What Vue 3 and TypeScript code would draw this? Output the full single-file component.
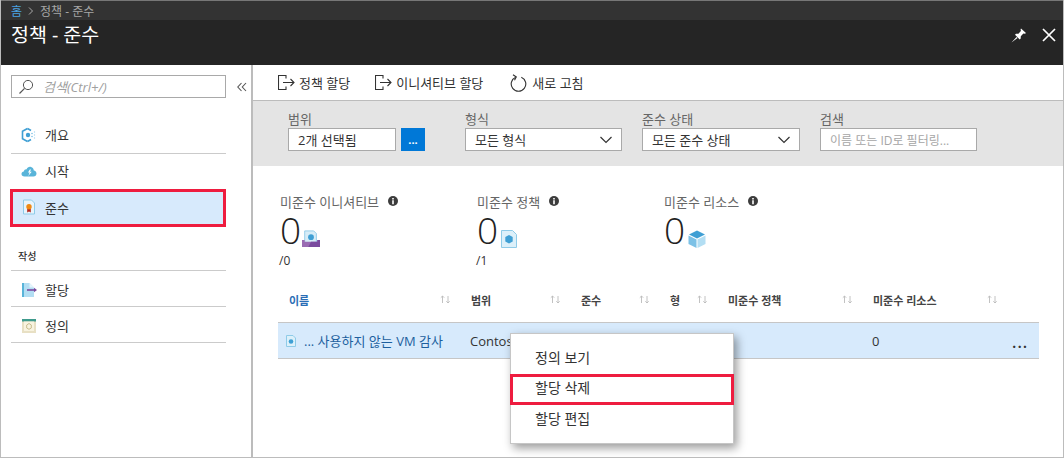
<script setup lang="ts">
const filters = [
  { label: '형식', value: '모든 형식', width: 157 },
  { label: '준수 상태', value: '모든 준수 상태', width: 158 },
];

const metrics = [
  { label: '미준수 이니셔티브', total: '/0', icon: 'initiative', width: 197 },
  { label: '미준수 정책', total: '/1', icon: 'policy', width: 187 },
  { label: '미준수 리소스', total: '', icon: 'resource', width: 160 },
];

const columns = [
  { label: '이름', width: 182, active: true },
  { label: '범위', width: 110, active: false },
  { label: '준수', width: 89, active: false },
  { label: '형', width: 58, active: false },
  { label: '미준수 정책', width: 145, active: false },
  { label: '미준수 리소스', width: 145, active: false },
];

const menuItems = ['정의 보기', '할당 삭제', '할당 편집'];
</script>

<template>
  <div class="page">
    <header class="top">
      <nav class="crumbs">
        <span class="home">홈</span>
        <svg class="crumb-sep" width="6" height="8" viewBox="0 0 6 8"><path d="M1 .5 4.500 4 1 7.500" fill="none" stroke="#aaa" /></svg>
        <span>정책 - 준수</span>
      </nav>
      <div class="title-bar">
        <h1>정책 - 준수</h1>
        <div class="window-actions">
          <svg width="17" height="15" viewBox="0 0 17 15"><path d="M11 .5 16 5 15 5.800 13.400 5.600 10.800 8.300 10.700 10.600 9.700 11.500 5 6.800 6 5.800 8.400 5.700 10.900 3 10.600 1.300ZM6.500 9 7.500 10 1.500 14.500Z" fill="#fff" /></svg>
          <svg width="14" height="14" viewBox="0 0 14 14"><path d="M1 1 13 13M13 1 1 13" stroke="#fff" stroke-width="1.700" /></svg>
        </div>
      </div>
    </header>

    <div class="body">
      <aside class="sidebar">
        <div class="search-row">
          <div class="search">
            <svg width="16" height="16" viewBox="0 0 16 16"><circle cx="10" cy="6" r="4.600" fill="none" stroke="#555" /><path d="M6.600 9.400 1.500 14.500" stroke="#555" stroke-width="1.200" /></svg>
            <span>검색(Ctrl+/)</span>
          </div>
          <svg class="collapse" width="10" height="10" viewBox="0 0 10 10"><path d="M4.500 1 .8 5l3.700 4M9 1 5.300 5 9 9" fill="none" stroke="#555" stroke-width="1.100" /></svg>
        </div>

        <ul class="menu first">
          <li>
            <svg width="16" height="16" viewBox="0 0 16 16"><path d="M6.500 1.500 1.500 4.300v7.400l5 2.800" fill="none" stroke="#3f9fd4" stroke-width="1.600" /><path d="M6.500 1.500 10 3.500M6.500 14.500 10 12.500" fill="none" stroke="#3f9fd4" stroke-width="1.600" /><circle cx="7" cy="8" r="2.200" fill="#3f9fd4" /><circle cx="11" cy="6.500" r=".8" fill="#7cc1e6" /><circle cx="11" cy="9.500" r=".8" fill="#7cc1e6" /><circle cx="13.500" cy="5" r=".7" fill="#a9d8f0" /><circle cx="13.500" cy="8" r=".7" fill="#a9d8f0" /><circle cx="13.500" cy="11" r=".7" fill="#a9d8f0" /></svg>
            <span>개요</span>
          </li>
          <li>
            <svg width="16" height="16" viewBox="0 0 16 16"><path d="M3.500 13.500C1.500 13.500 .5 12.300.5 11c0-1.400 1-2.400 2.300-2.500C3.200 7 4.300 6.200 5.500 6.400 6.300 4.500 8 3.500 10 4c1.700.4 2.700 1.800 2.800 3.400 1.600.2 2.700 1.500 2.700 3 0 1.700-1.300 3.100-3 3.100Z" fill="#59b4d9" /><path d="M8.800 6.500 7 9.500h1.600L7.300 13l3.400-4.300H9l1-2.200Z" fill="#fff" /></svg>
            <span>시작</span>
          </li>
          <li class="selected">
            <svg width="16" height="16" viewBox="0 0 16 16"><path d="M2.500 1h8l3 3v11h-11Z" fill="#e8f4fb" stroke="#8fcbe8" /><path d="M6.200 9.500v4l1.800-1 1.800 1v-4Z" fill="#b5261e" /><circle cx="8" cy="7.800" r="2.700" fill="#f08a13" /></svg>
            <span>준수</span>
          </li>
        </ul>

        <div class="section-label">작성</div>
        <ul class="menu">
          <li>
            <svg width="16" height="16" viewBox="0 0 16 16"><path d="M1 1h7.500l4.500 4.500V15H1Z" fill="#b3def3" /><path d="M1 1h2v14H1Z" fill="#59b4d9" /><path d="M8.500 1v4.500H13Z" fill="#e5f4fb" /><path d="M6 8h8" stroke="#7a4a9e" stroke-width="1.600" /><path d="M13 5.800 16 8l-3 2.200Z" fill="#7a4a9e" /></svg>
            <span>할당</span>
          </li>
          <li>
            <svg width="16" height="16" viewBox="0 0 16 16"><path d="M1 1.500h14V15H1Z" fill="#e8e0c4" /><path d="M1 1h14v2.500H1Z" fill="#3f9a8c" /><path d="M3 3.500h10V13H3Z" fill="#f8f3e0" /><path d="M8 5.500 10.300 7v3L8 11.300 5.700 10V7Z" fill="#f8f3e0" stroke="#c8bd8e" /></svg>
            <span>정의</span>
          </li>
        </ul>
      </aside>

      <main class="content">
        <div class="toolbar">
          <button class="tool">
            <svg width="17" height="16" viewBox="0 0 17 16"><path d="M8 3.500V.5H.5v14H8v-3M5 7.500h11M12.500 4l3.500 3.500-3.500 3.500" fill="none" stroke="#333" stroke-width="1.100" /></svg>
            <span>정책 할당</span>
          </button>
          <button class="tool initiative-tool">
            <svg width="17" height="16" viewBox="0 0 17 16"><path d="M8 3.500V.5H.5v14H8v-3M5 7.500h11M12.500 4l3.500 3.500-3.500 3.500" fill="none" stroke="#333" stroke-width="1.100" /></svg>
            <span>이니셔티브 할당</span>
          </button>
          <button class="tool refresh-tool">
            <svg width="17" height="18" viewBox="0 0 17 18"><path d="M11.300 3.200a7.300 7.300 0 1 1-5.600 0" fill="none" stroke="#333" stroke-width="1.100" /><path d="M3 .7 6.300 3 4.500 6.300" fill="none" stroke="#333" stroke-width="1.100" /></svg>
            <span>새로 고침</span>
          </button>
        </div>

        <div class="filters">
          <div class="field">
            <label>범위</label>
            <div class="scope">
              <div class="input scope-input">2개 선택됨</div>
              <button class="scope-button">...</button>
            </div>
          </div>
          <div v-for="filter in filters" :key="filter.label" class="field">
            <label>{{ filter.label }}</label>
            <div class="input select" :style="{ width: filter.width + 'px' }">
              <span>{{ filter.value }}</span>
              <svg width="14" height="8" viewBox="0 0 14 8"><path d="M1.500 1 7 6.500 12.500 1" fill="none" stroke="#333" stroke-width="1.200" /></svg>
            </div>
          </div>
          <div class="field">
            <label>검색</label>
            <div class="input search-input">이름 또는 ID로 필터링...</div>
          </div>
        </div>

        <section class="metrics">
          <div v-for="metric in metrics" :key="metric.label" class="metric" :style="{ width: metric.width + 'px' }">
            <div class="metric-label">
              <span>{{ metric.label }}</span>
              <svg width="10" height="10" viewBox="0 0 10 10"><circle cx="5" cy="5" r="5" fill="#3c3c3c" /><path d="M4.200 2h1.600v1.400H4.200ZM4.200 4.300h1.600v3.900H4.200Z" fill="#fff" /></svg>
            </div>
            <div class="metric-value">
              <span>0</span>
              <svg v-if="metric.icon === 'initiative'" class="initiative-icon" width="18" height="18" viewBox="0 0 20 20"><path d="M3 1h10l3 3v12H3Z" fill="#d6ecf7" stroke="#8fcbe8" /><circle cx="10" cy="8" r="3.200" fill="#3f9fd4" /><path d="M0 11h3v2h14v-2h3v8H0Z" fill="#9a6bb3" /><path d="M10 13h7v-2h3v8H7Z" fill="#7a4a9e" /></svg>
              <svg v-else-if="metric.icon === 'policy'" width="16" height="18" viewBox="0 0 16 18"><path d="M.5.500h11l4 4v13H.5Z" fill="#dcf0fa" stroke="#8fcbe8" /><path d="M8 5l3.700 2.100v4.300L8 13.500l-3.700-2.100V7.100Z" fill="#3f9fd4" /></svg>
              <svg v-else width="18" height="18" viewBox="0 0 18 18"><path d="M9 .5 17 4.500 9 8.500 1 4.500Z" fill="#3f9fd4" /><path d="M.500 5.500 8.500 9.500V18L.500 14Z" fill="#7cc1e6" /><path d="M17.500 5.500 9.500 9.500V18l8-4Z" fill="#b3def3" /></svg>
            </div>
            <div class="metric-total">{{ metric.total }}</div>
          </div>
        </section>

        <section class="table">
          <div class="table-head">
            <div
              v-for="column in columns"
              :key="column.label"
              class="head-cell"
              :class="{ active: column.active }"
              :style="{ width: column.width + 'px' }"
            >
              <span>{{ column.label }}</span>
              <svg class="sort" width="11" height="9" viewBox="0 0 11 9"><path d="M2.500 8V1M.8 2.700 2.500 1l1.700 1.700M8 1v7M6.300 6.300 8 8l1.700-1.700" fill="none" stroke="#bbb" stroke-width=".9" /></svg>
            </div>
          </div>

          <div class="table-row">
            <div class="name-cell">
              <svg width="10" height="12" viewBox="0 0 10 12"><path d="M.5.500h6.500l2.500 2.500v8.500h-9Z" fill="#dcf0fa" stroke="#8fcbe8" /><circle cx="5" cy="6.500" r="2.300" fill="#3f9fd4" /></svg>
              <span>... 사용하지 않는 VM 감사</span>
            </div>
            <div class="scope-cell">Contoso</div>
            <div class="resource-cell">0</div>
            <div class="more-cell">...</div>

            <ul class="context-menu">
              <li
                v-for="item in menuItems"
                :key="item"
                :class="{ flagged: item === '할당 삭제' }"
              >{{ item }}</li>
            </ul>
          </div>
        </section>
      </main>
    </div>
  </div>
</template>

<style>
html,
body {
  margin: 0;
  background: #fff;
}
</style>

<style scoped>
.page {
  width: 1064px;
  height: 458px;
  box-sizing: border-box;
  display: flex;
  flex-direction: column;
  overflow: hidden;
  border: 1px solid #bcbcbc;
  border-top: 0;
  font-family: "Open Sans", "Noto Sans CJK KR", sans-serif;
  font-size: 13px;
  color: #333;
}

ul {
  list-style: none;
  margin: 0;
  padding: 0;
}

button {
  font: inherit;
  border: 0;
  padding: 0;
  background: none;
  color: inherit;
}

.top {
  flex: none;
  border-top: 1px solid #777;
  background: #252525;
}

.crumbs {
  height: 19px;
  display: flex;
  align-items: center;
  gap: 6px;
  padding-left: 10px;
  background: #333;
  font-size: 12px;
  color: #a6a6a6;
}

.home {
  color: #4ba3e3;
}

.title-bar {
  height: 45px;
  display: flex;
  justify-content: space-between;
  padding: 0 7px 0 10px;
}

h1 {
  margin: 3px 0 0;
  font-size: 19.500px;
  font-weight: 400;
  line-height: 24px;
  color: #fff;
}

.window-actions {
  display: flex;
  align-items: center;
  gap: 15px;
  height: 30px;
}

.body {
  flex: 1;
  min-height: 0;
  display: flex;
}

.sidebar {
  flex: none;
  width: 250px;
  border-right: 2px solid #bcbcbc;
  padding-top: 10px;
}

.search-row {
  display: flex;
  align-items: center;
  padding-left: 10px;
}

.search {
  width: 215px;
  height: 23px;
  box-sizing: border-box;
  display: flex;
  align-items: center;
  gap: 9px;
  padding-left: 6px;
  border: 1px solid #a9a9a9;
  color: #a0a0a0;
  font-style: italic;
}

.collapse {
  margin-left: 11px;
}

.menu {
  width: 215px;
  margin-left: 10px;
}

.menu.first {
  margin-top: 20px;
}

.menu.first li {
  padding-bottom: 2px;
}

.menu li {
  height: 36px;
  box-sizing: border-box;
  display: flex;
  align-items: center;
  gap: 8px;
  padding-left: 10px;
  border-bottom: 1px solid #cbcbcb;
  color: #333;
}

.menu li.selected {
  width: 216px;
  height: 38px;
  margin: -1px 0 0 -1px;
  padding-left: 8px;
  border: 3px solid #ee1c3f;
  background: #d7eafc;
}

.section-label {
  margin: 20px 0 0 17px;
  height: 23px;
  font-size: 10px;
  font-weight: 500;
  line-height: 18px;
  color: #333;
}

.section-label + .menu {
  border-top: 1px solid #cbcbcb;
}

.section-label + .menu li {
  padding-top: 2px;
}

.content {
  flex: 1;
  min-width: 0;
}

.toolbar {
  height: 35px;
  display: flex;
  align-items: center;
  padding-left: 25px;
  border-bottom: 1px solid #bcbcbc;
}

.tool {
  display: flex;
  align-items: center;
  gap: 4px;
  color: #333;
}

.initiative-tool {
  margin-left: 25px;
}

.refresh-tool {
  margin-left: 27px;
  gap: 5px;
}

.filters {
  height: 65px;
  box-sizing: border-box;
  display: flex;
  gap: 20px;
  padding: 10px 0 0 35px;
  background: #e4e4e4;
}

.field label {
  display: block;
  height: 17px;
  line-height: 17px;
  color: #666;
}

.scope {
  display: flex;
  gap: 5px;
  margin-right: 20px;
}

.input {
  height: 23px;
  box-sizing: border-box;
  display: flex;
  align-items: center;
  padding: 0 9px;
  border: 1px solid #a9a9a9;
  background: #fff;
  color: #333;
}

.scope-input {
  width: 108px;
}

.scope-button {
  width: 24px;
  height: 23px;
  background: #0078d7;
  color: #fff;
  font-weight: 700;
  font-size: 11px;
  line-height: 23px;
}

.select {
  justify-content: space-between;
}

.select svg {
  margin-right: -1px;
}

.search-input {
  width: 157px;
  color: #a6a6a6;
  font-size: 12px;
}

.metrics {
  display: flex;
  height: 123px;
  box-sizing: border-box;
  padding: 27px 0 0 27px;
}

.metric-label {
  display: flex;
  align-items: center;
  gap: 9px;
  height: 16px;
  color: #666;
}

.metric-value {
  display: flex;
  align-items: flex-end;
  gap: 3px;
  height: 38px;
  margin-top: 2px;
  font-size: 37px;
  font-weight: 300;
  line-height: 38px;
  color: #222;
}

.metric-value svg {
  margin-bottom: 1px;
}

.metric-value .initiative-icon {
  margin-left: -2px;
}

.metric-total {
  height: 16px;
  margin-top: 4px;
  margin-left: -1px;
  line-height: 16px;
  font-size: 12px;
  color: #333;
}

.table {
  width: 761px;
  margin-left: 25px;
}

.table-head {
  display: flex;
  height: 33px;
  box-sizing: border-box;
  padding-top: 4px;
}

.head-cell {
  position: relative;
  box-sizing: border-box;
  padding-left: 11px;
  font-size: 11px;
  font-weight: 600;
  line-height: 16px;
  color: #444;
}

.head-cell.active {
  color: #2a6db5;
}

.sort {
  position: absolute;
  right: 9px;
  top: 2px;
}

.table-row {
  position: relative;
  height: 37px;
  box-sizing: border-box;
  display: flex;
  align-items: center;
  border-top: 1px solid #c6c6c6;
  border-bottom: 1px solid #c6c6c6;
  background: #d7eafc;
}

.name-cell {
  width: 192px;
  box-sizing: border-box;
  display: flex;
  align-items: center;
  gap: 8px;
  padding-left: 8px;
  color: #1d5f9e;
}

.scope-cell {
  width: 402px;
}

.resource-cell {
  width: 140px;
}

.more-cell {
  font-size: 16px;
  font-weight: 600;
  letter-spacing: 1px;
  line-height: 16px;
  margin-top: 2px;
}

.context-menu {
  position: absolute;
  left: 232px;
  top: 10px;
  width: 224px;
  height: 111px;
  box-sizing: border-box;
  padding-top: 9px;
  border: 1px solid #c6c6c6;
  background: #fff;
  box-shadow: 3px 4px 9px rgba(0, 0, 0, 0.4);
  font-size: 14px;
}

.context-menu li {
  height: 31px;
  box-sizing: border-box;
  padding-left: 24px;
  line-height: 29px;
  color: #333;
}

.context-menu li:last-child {
  line-height: 27px;
}

.context-menu li.flagged {
  margin: 0 -1px;
  padding-left: 22px;
  border: 3px solid #ee1c3f;
  line-height: 22px;
}
</style>
